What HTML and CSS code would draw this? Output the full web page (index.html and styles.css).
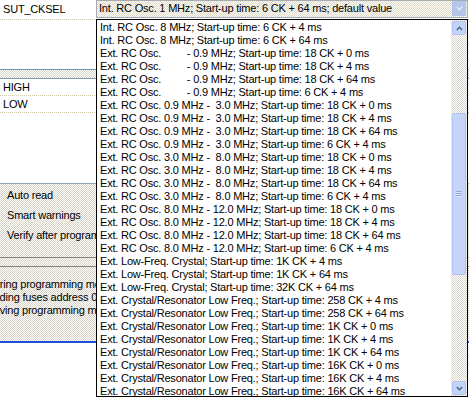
FILE: index.html
```html
<!DOCTYPE html>
<html lang="en">
    <head>
        <meta charset="UTF-8" />
        <title>Fuses</title>
        <link rel="stylesheet" href="styles.css">
    </head>
    <body>
        <div class="window">
            <div class="fuse-row top">
                <div class="fuse-name">SUT_CKSEL</div>
                <div class="combo">
                    <div class="combo-text">Int. RC Osc. 1 MHz; Start-up time: 6 CK + 64 ms; default value</div>
                    <div class="combo-button">
                        <svg viewBox="0 0 9 5"><path d="M1 0.5 L4.5 4 L8 0.5" /></svg>
                    </div>
                </div>
            </div>
            <div class="blank first"></div>
            <div class="band"></div>
            <div class="fuse-row">
                <div class="fuse-name">HIGH</div>
            </div>
            <div class="fuse-row">
                <div class="fuse-name">LOW</div>
            </div>
            <div class="blank second"></div>
            <div class="options">
                <div class="option">Auto read</div>
                <div class="option">Smart warnings</div>
                <div class="option">Verify after programming</div>
            </div>
            <div class="splitter"></div>
            <div class="log">
                <div class="log-line l1">Entering programming mode.. OK!</div>
                <div class="log-line l2">Reading fuses address 0 to 2 .. 0xFF, 0xD9, 0xE1 .. OK!</div>
                <div class="log-line l3">Leaving programming mode.. OK!</div>
            </div>
            <div class="status-line"></div>
        </div>

        <div class="dropdown">
            <div class="items">
                <div class="item">Int. RC Osc. 8 MHz; Start-up time: 6 CK + 4 ms</div>
                <div class="item">Int. RC Osc. 8 MHz; Start-up time: 6 CK + 64 ms</div>
                <div class="item">Ext. RC Osc.         - 0.9 MHz; Start-up time: 18 CK + 0 ms</div>
                <div class="item">Ext. RC Osc.         - 0.9 MHz; Start-up time: 18 CK + 4 ms</div>
                <div class="item">Ext. RC Osc.         - 0.9 MHz; Start-up time: 18 CK + 64 ms</div>
                <div class="item">Ext. RC Osc.         - 0.9 MHz; Start-up time: 6 CK + 4 ms</div>
                <div class="item">Ext. RC Osc. 0.9 MHz -  3.0 MHz; Start-up time: 18 CK + 0 ms</div>
                <div class="item">Ext. RC Osc. 0.9 MHz -  3.0 MHz; Start-up time: 18 CK + 4 ms</div>
                <div class="item">Ext. RC Osc. 0.9 MHz -  3.0 MHz; Start-up time: 18 CK + 64 ms</div>
                <div class="item">Ext. RC Osc. 0.9 MHz -  3.0 MHz; Start-up time: 6 CK + 4 ms</div>
                <div class="item">Ext. RC Osc. 3.0 MHz -  8.0 MHz; Start-up time: 18 CK + 0 ms</div>
                <div class="item">Ext. RC Osc. 3.0 MHz -  8.0 MHz; Start-up time: 18 CK + 4 ms</div>
                <div class="item">Ext. RC Osc. 3.0 MHz -  8.0 MHz; Start-up time: 18 CK + 64 ms</div>
                <div class="item">Ext. RC Osc. 3.0 MHz -  8.0 MHz; Start-up time: 6 CK + 4 ms</div>
                <div class="item">Ext. RC Osc. 8.0 MHz - 12.0 MHz; Start-up time: 18 CK + 0 ms</div>
                <div class="item">Ext. RC Osc. 8.0 MHz - 12.0 MHz; Start-up time: 18 CK + 4 ms</div>
                <div class="item">Ext. RC Osc. 8.0 MHz - 12.0 MHz; Start-up time: 18 CK + 64 ms</div>
                <div class="item">Ext. RC Osc. 8.0 MHz - 12.0 MHz; Start-up time: 6 CK + 4 ms</div>
                <div class="item">Ext. Low-Freq. Crystal; Start-up time: 1K CK + 4 ms</div>
                <div class="item">Ext. Low-Freq. Crystal; Start-up time: 1K CK + 64 ms</div>
                <div class="item">Ext. Low-Freq. Crystal; Start-up time: 32K CK + 64 ms</div>
                <div class="item">Ext. Crystal/Resonator Low Freq.; Start-up time: 258 CK + 4 ms</div>
                <div class="item">Ext. Crystal/Resonator Low Freq.; Start-up time: 258 CK + 64 ms</div>
                <div class="item">Ext. Crystal/Resonator Low Freq.; Start-up time: 1K CK + 0 ms</div>
                <div class="item">Ext. Crystal/Resonator Low Freq.; Start-up time: 1K CK + 4 ms</div>
                <div class="item">Ext. Crystal/Resonator Low Freq.; Start-up time: 1K CK + 64 ms</div>
                <div class="item">Ext. Crystal/Resonator Low Freq.; Start-up time: 16K CK + 0 ms</div>
                <div class="item">Ext. Crystal/Resonator Low Freq.; Start-up time: 16K CK + 4 ms</div>
                <div class="item">Ext. Crystal/Resonator Low Freq.; Start-up time: 16K CK + 64 ms</div>
            </div>
            <div class="scrollbar">
                <div class="scroll-btn">
                    <svg viewBox="0 0 9 5"><path d="M1 4.5 L4.5 1 L8 4.5" /></svg>
                </div>
                <div class="track">
                    <div class="thumb">
                        <div class="grip"></div>
                    </div>
                </div>
                <div class="scroll-btn">
                    <svg viewBox="0 0 9 5"><path d="M1 0.5 L4.5 4 L8 0.5" /></svg>
                </div>
            </div>
        </div>
    </body>
</html>
```

FILE: styles.css
```css
* {
    margin: 0;
    padding: 0;
    box-sizing: border-box;
}
body {
    width: 469px;
    height: 397px;
    overflow: hidden;
    background: #fff;
    font-family: 'Liberation Sans', Arial, sans-serif;
    font-size: 11px;
    letter-spacing: -0.2px;
    color: #000;
    position: relative;
}
.window {
    display: flex;
    flex-direction: column;
}

/* fuse table */
.fuse-row {
    display: flex;
    align-items: center;
    height: 17px;
    border-bottom: 1px dotted #cfc8a4;
}
.fuse-row.top {
    height: 20px;
    align-items: flex-start;
}
.fuse-name {
    width: 96px;
    padding-left: 3px;
    line-height: 16px;
}
.fuse-row.top .fuse-name {
    line-height: 18px;
}
.combo {
    width: 372px;
    height: 18px;
    display: flex;
    border: 1px solid #a5acb5;
    background: repeating-conic-gradient(#dcd8c4 0 25%, #fff 0 50%) 0 0 / 2px 2px;
}
.combo-text {
    flex: 1;
    padding-left: 2px;
    line-height: 15px;
    white-space: nowrap;
    overflow: hidden;
}
.combo-button {
    width: 14px;
    margin: 0 1px 1px 0;
    background: #b5c4e9;
    display: flex;
    align-items: center;
    justify-content: center;
}
.combo-button svg {
    width: 7px;
    height: 5px;
    fill: none;
    stroke: #eef2fc;
    stroke-width: 1.6;
}
.blank.first {
    height: 49px;
}
.blank.second {
    height: 70px;
}
.band {
    height: 10px;
    border-top: 1px solid #7f9db9;
    border-bottom: 1px solid #7f9db9;
    background: repeating-conic-gradient(#d6d3c6 0 25%, #fff 0 50%) 0 0 / 2px 2px;
}

/* options panel */
.options {
    height: 74px;
    border-top: 1px solid #8aa4bc;
    padding: 1px 0 0 7px;
    background: repeating-conic-gradient(#d6d3c6 0 25%, #fff 0 50%) 0 0 / 2px 2px;
}
.option {
    line-height: 20px;
    white-space: nowrap;
}
.splitter {
    height: 10px;
    border-top: 1px solid #86826e;
    border-bottom: 1px solid #86826e;
    background: repeating-conic-gradient(#d6d3c6 0 25%, #fff 0 50%) 0 0 / 2px 2px;
}
.log {
    height: 74px;
    padding-top: 11px;
    overflow: hidden;
    background: repeating-conic-gradient(#d6d3c6 0 25%, #fff 0 50%) 0 0 / 2px 2px;
}
.log-line {
    line-height: 13px;
    white-space: nowrap;
}
.log-line.l1 {
    margin-left: -22px;
}
.log-line.l2 {
    margin-left: -20px;
}
.log-line.l3 {
    margin-left: -18px;
}
.status-line {
    height: 2px;
    background: #1f4fd4;
}

/* open drop-down list */
.dropdown {
    position: absolute;
    left: 96px;
    top: 19px;
    width: 372px;
    height: 378px;
    border: 1px solid #000;
    background: #fff;
    display: flex;
    overflow: hidden;
}
.items {
    flex: 1;
    padding: 1px 0 0 3px;
    overflow: hidden;
}
.item {
    line-height: 13px;
    white-space: pre;
}
.scrollbar {
    width: 16px;
    display: flex;
    flex-direction: column;
    padding: 1px;
    background: repeating-conic-gradient(#d8d6cc 0 25%, #fff 0 50%) 0 0 / 2px 2px;
}
.scroll-btn {
    height: 14px;
    background: #c4d3f8;
    border: 1px solid #b2c3ee;
    border-radius: 2px;
    display: flex;
    align-items: center;
    justify-content: center;
}
.scroll-btn svg {
    width: 7px;
    height: 5px;
    fill: none;
    stroke: #4d6185;
    stroke-width: 1.8;
}
.track {
    flex: 1;
    padding-top: 78px;
}
.thumb {
    height: 162px;
    background: #c6d4f9;
    border: 1px solid #b0c2f0;
    border-radius: 2px;
    display: flex;
    align-items: center;
    justify-content: center;
}
.grip {
    width: 6px;
    height: 6px;
    background: repeating-linear-gradient(#8ea6e6 0 1px, #e0e8fc 1px 2px);
}
```
